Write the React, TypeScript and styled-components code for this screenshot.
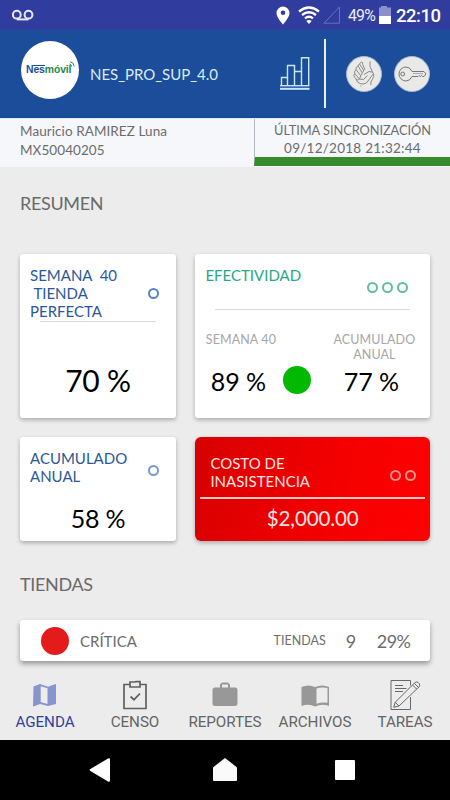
import React from "react";
import styled, { createGlobalStyle } from "styled-components";

const GlobalStyle = createGlobalStyle`
  * { box-sizing: border-box; }
  body { margin: 0; background: #ececec; font-family: Lato, sans-serif; }
`;

const Screen = styled.div`
  width: 450px;
  height: 800px;
  display: flex;
  flex-direction: column;
  overflow: hidden;
  background: #ececec;
`;

const StatusBar = styled.div`
  height: 30px;
  flex: none;
  display: flex;
  align-items: center;
  padding: 0 10px 0 12px;
  background: #303d9f;
  color: #fff;
  font-family: Roboto, sans-serif;
  svg { flex: none; display: block; }
`;

const StatusCluster = styled.div`
  flex: 1;
  display: flex;
  align-items: center;
  svg:nth-of-type(3) { margin-left: 8px; }
  svg:nth-of-type(4) { margin-left: 3px; }
`;

const Spacer = styled.div`
  flex: 1;
`;

const Battery = styled.span`
  font-size: 15.8px;
  width: 27px;
  margin-left: 7px;
  padding-top: 1px;
  letter-spacing: -0.8px;
  color: #eceefa;
  white-space: nowrap;
`;

const Clock = styled.span`
  font-size: 18.5px;
  font-weight: 500;
  width: 44px;
  margin-left: 4px;
  padding-top: 1px;
  letter-spacing: -0.5px;
  white-space: nowrap;
`;

const Header = styled.header`
  height: 88px;
  flex: none;
  display: flex;
  align-items: center;
  padding: 0 20.5px 0 21px;
  background: #1b4d9b;
  border-bottom: 1px solid #104a95;
`;

const Logo = styled.div`
  width: 58px;
  height: 58px;
  margin: -7px 11px 0 0;
  flex: none;
  display: flex;
  align-items: center;
  padding-left: 5px;
  border-radius: 50%;
  background: #fff;
  font: 700 10.4px/14px "Liberation Sans", sans-serif;
  svg { display: block; flex: none; margin: -13px 0 0 -2px; }
`;

const BrandPart = styled.span<{ $color: string; $bar?: boolean }>`
  display: block;
  color: ${(p) => p.$color};
  letter-spacing: -0.1px;
  background: ${(p) => (p.$bar ? "linear-gradient(#19509b, #19509b) 7px 2px / 12px 1px no-repeat" : "none")};
`;

const AppName = styled.div`
  flex: 1;
  font-size: 15px;
  line-height: 18px;
  letter-spacing: -0.03px;
  color: #dbeafa;
  white-space: nowrap;
`;

const Divider = styled.div`
  width: 1.5px;
  height: 69px;
  margin: 0 20.5px 0 14px;
  background: #e9f2fb;
`;

const RoundButton = styled.div`
  width: 36px;
  height: 36px;
  margin-left: 11.5px;
  border-radius: 50%;
  background: #e9e9e8;
  border: 1px solid #a9bbd3;
  display: flex;
  align-items: center;
  justify-content: center;
  &:first-of-type { margin-left: 0; }
`;

const Buttons = styled.div`
  display: flex;
`;

const InfoBar = styled.section`
  height: 49px;
  flex: none;
  display: flex;
  background: #f5f7fb;
  border-top: 1px solid #e4ebf5;
  color: #6c6c6c;
`;

const User = styled.div`
  width: 254px;
  padding: 3px 0 0 20px;
  font-size: 13.5px;
  line-height: 18.5px;
  letter-spacing: 0.07px;
`;

const Sync = styled.div`
  flex: 1;
  height: 47px;
  padding-top: 2px;
  border-left: 1px solid #b4b9c2;
  border-bottom: 9px solid #388b2c;
  text-align: center;
  font-size: 13.5px;
  line-height: 18px;
  white-space: nowrap;
`;

const SyncTitle = styled.div`
  font-size: 12.8px;
  letter-spacing: -0.05px;
`;

const SyncDate = styled.div`
  letter-spacing: 0.25px;
`;

const Content = styled.main`
  flex: 1;
  padding: 0 20px;
`;

const SectionTitle = styled.h2<{ $top: number; $bottom: number }>`
  margin: 0;
  padding: ${(p) => p.$top}px 0 ${(p) => p.$bottom}px;
  font-size: 18px;
  font-weight: 400;
  line-height: 22px;
  letter-spacing: -0.35px;
  color: #6a6a6a;
`;

const Grid = styled.div`
  display: grid;
  grid-template-columns: 156px 234.6px;
  grid-template-rows: 164px 104px;
  column-gap: 19.4px;
  row-gap: 19px;
`;

const Card = styled.div<{ $danger?: boolean }>`
  display: flex;
  flex-direction: column;
  border-radius: ${(p) => (p.$danger ? 6 : 3)}px;
  background: ${(p) => (p.$danger ? "linear-gradient(100deg, #d80000, #f60000 65%, #ff0000)" : "#fff")};
  box-shadow: 0 2px 4px rgba(0, 0, 0, 0.28);
  color: ${(p) => (p.$danger ? "#ffe3e0" : "#000")};
`;

const CardHead = styled.div<{ $height: number; $color: string; $padding: string }>`
  height: ${(p) => p.$height}px;
  flex: none;
  display: flex;
  justify-content: space-between;
  padding: ${(p) => p.$padding};
  font-size: 15px;
  line-height: 18.1px;
  color: ${(p) => p.$color};
  white-space: pre;
`;

const Rings = styled.div<{ $top: number }>`
  display: flex;
  gap: 4px;
  height: 11px;
  margin-top: ${(p) => p.$top}px;
`;

const Ring = styled.i<{ $color: string }>`
  width: 11px;
  height: 11px;
  border-radius: 50%;
  border: 2px solid ${(p) => p.$color};
`;

const Rule = styled.div<{ $margin: string; $color?: string; $size?: number }>`
  height: ${(p) => p.$size ?? 1}px;
  flex: none;
  margin: ${(p) => p.$margin};
  background: ${(p) => p.$color ?? "#dadada"};
`;

const Value = styled.div<{ $size: number; $top?: number; $spacing?: number }>`
  margin-top: ${(p) => p.$top ?? 0}px;
  font-size: ${(p) => p.$size}px;
  line-height: 36px;
  letter-spacing: ${(p) => p.$spacing ?? 0}px;
  text-align: center;
  white-space: nowrap;
`;

const Stats = styled.div`
  display: grid;
  grid-template-columns: 86px 31.5px 117px;
  margin-top: 23px;
`;

const StatLabel = styled.div<{ $inset?: number }>`
  height: 30px;
  padding-left: ${(p) => p.$inset ?? 0}px;
  font-size: 12.5px;
  line-height: 14.7px;
  letter-spacing: 0.1px;
  text-align: center;
  color: #a6a6a6;
  white-space: pre-line;
`;

const Dot = styled.i<{ $color: string; $margin?: string }>`
  width: 28px;
  height: 28px;
  margin: ${(p) => p.$margin ?? "0"};
  border-radius: 50%;
  background: ${(p) => p.$color};
`;

const StoreRow = styled.div`
  height: 41px;
  display: flex;
  align-items: center;
  padding: 0 19.5px 0 21px;
  border-radius: 3px;
  background: #fff;
  box-shadow: 0 3px 5px rgba(0, 0, 0, 0.36);
  color: #6c6c6c;
`;

const StoreName = styled.div`
  flex: 1;
  margin-left: 11px;
  font-size: 15px;
`;

const StoreUnit = styled.div`
  font-size: 12.5px;
`;

const StoreNumber = styled.div<{ $gap: number }>`
  margin-left: ${(p) => p.$gap}px;
  font-size: 18px;
  letter-spacing: -0.5px;
`;

const TabBar = styled.nav`
  height: 70px;
  flex: none;
  display: grid;
  grid-template-columns: repeat(5, 90px);
  background: #ececec;
`;

const Tab = styled.div<{ $active?: boolean }>`
  display: flex;
  flex-direction: column;
  align-items: center;
  font-family: Roboto, sans-serif;
  font-size: 15.2px;
  line-height: 18px;
  letter-spacing: -0.05px;
  color: ${(p) => (p.$active ? "#30409c" : "#646464")};
  svg { display: block; height: 43px; flex: none; }
`;

const SystemNav = styled.div`
  height: 60px;
  flex: none;
  background: #000;
  display: grid;
  grid-template-columns: 40px 120px 130px 110px 50px;
  align-items: center;
  justify-items: center;
  svg { display: block; }
`;

const tabs = [
  {
    label: "AGENDA",
    active: true,
    icon: (
      <svg width="40" height="43" viewBox="0 0 40 43">
        <path fill="#8994cf" fillRule="evenodd" d="M8.500 16.500 15 14l8 2.700 7.500-2.700q.5 0 .5.500v19.500l-8 2-8-2-6.500 2.500-.5-.5zM15.700 16.200v15.800l6.800 2V18.300z" />
      </svg>
    ),
  },
  {
    label: "CENSO",
    icon: (
      <svg width="40" height="43" viewBox="0 0 40 43" fill="none" stroke="#606060" strokeWidth="1.700">
        <path d="M15 14.500H9v24h22v-24h-6M15 12h5l1-.3h4V17H15zM15.500 26.500l3.500 3.200 6-6.200" />
      </svg>
    ),
  },
  {
    label: "REPORTES",
    icon: (
      <svg width="40" height="43" viewBox="0 0 40 43">
        <path fill="#989898" fillRule="evenodd" d="M10 18h5v-3l2-2h6l2 2v3h5q2.500 0 2.500 2.500v14q0 2-2.500 2H10q-2.500 0-2.500-2v-14Q7.500 18 10 18m7 0h6v-3h-6z" transform="translate(0 -.5)" />
      </svg>
    ),
  },
  {
    label: "ARCHIVOS",
    icon: (
      <svg width="40" height="43" viewBox="0 0 40 43">
        <path fill="#989898" fillRule="evenodd" d="M6.500 17q7-3 13.500 0 7-3 14 0v19q-7-2.700-14 .5-6.500-3-13.500-.5zM21.500 18.500v15.300q5.500-2.200 11-1V18q-5.500-1.400-11 .5" />
      </svg>
    ),
  },
  {
    label: "TAREAS",
    icon: (
      <svg width="40" height="43" viewBox="0 0 40 43" fill="none" stroke="#686868" strokeWidth="1">
        <path d="M25.500 15.500v-5H6v29h19.500V27M10 15.500h8M10 18.500h11.500M10 21.500h8" />
        <path d="M8.700 37.300l1.500-5L29.800 12.700q1.600-1.500 3.300-.2l1 1q1.400 1.700 0 3.300L14 36zM10.200 32.300 14 36M27.500 15l4 4M29.300 13.300l4 4" />
      </svg>
    ),
  },
];

function StatusIcons() {
  return (
    <>
      <svg width="22" height="14" viewBox="0 0 22 14" fill="none" stroke="#e6e8f6" strokeWidth="2">
        <circle cx="4.800" cy="6.700" r="3.900" />
        <circle cx="16.500" cy="6.700" r="3.900" />
        <path d="M4.800 11.400h11.700" />
      </svg>
      <Spacer />
      <svg width="14" height="20" viewBox="0 0 14 20">
        <path fill="#fff" fillRule="evenodd" d="M7 1.500A6.500 6.500 0 0 0 .5 8C.5 12.500 7 19.500 7 19.500s6.500-7 6.500-11.500A6.500 6.500 0 0 0 7 1.500m0 4a2.300 2.300 0 1 1 0 4.600 2.300 2.300 0 0 1 0-4.600" />
      </svg>
      <svg width="22" height="18" viewBox="0 0 22 18" fill="none" stroke="#fff" strokeWidth="2.300">
        <path d="M1 5.500q10-8 20 0M4 9q7-5.500 14 0M7 12.300q4-3 8 0" />
        <path d="M8.300 15q2.700-1.800 5.400 0L11 18z" fill="#fff" stroke="none" />
      </svg>
      <svg width="18" height="18" viewBox="0 0 18 18" fill="none" stroke="#6871bd">
        <path d="M1 17.200h15.500V1z" />
      </svg>
    </>
  );
}

export default function App() {
  return (
    <>
      <GlobalStyle />
      <Screen>
        <StatusBar>
          <StatusCluster>
            <StatusIcons />
          </StatusCluster>
          <Battery>49%</Battery>
          <svg width="17" height="20" viewBox="0 0 17 20">
            <path d="M5 2.500h1V1h6v1.500h4V11H4V2.500z" fill="#8b8fcc" />
            <path d="M4 11h12v8H4z" fill="#fff" />
          </svg>
          <Clock>22:10</Clock>
        </StatusBar>

        <Header>
          <Logo>
            <BrandPart $color="#19509b" $bar>Nes</BrandPart>
            <BrandPart $color="#218a4c">móvil</BrandPart>
            <svg width="6" height="6" viewBox="0 0 6 6" fill="none" stroke="#2f9550">
              <path d="M.5 3q2 .2 2 2.500M1 .8q4 .4 4.200 4.700" />
            </svg>
          </Logo>
          <AppName>NES_PRO_SUP_4.0</AppName>
          <svg width="30" height="34" viewBox="0 0 30 34" fill="none" stroke="#c9e8fb" strokeWidth="1.400">
            <path d="M1.500 28v-7.500h6V28M7.500 28V8.500h7V28M14.500 28V14.500h7V28M21.500 28V.8h7.200V28" />
            <path d="M0 28.700h29.500" />
            <path d="M0 31.800h29.500" strokeWidth="2" />
          </svg>
          <Divider />
          <Buttons>
            <RoundButton>
              <svg width="34" height="34" viewBox="0 0 34 34" fill="none" stroke="#8a8a8a" strokeWidth="1">
                <path d="M14.500 5q-2.500 1.500-3.500 4l4 6.500q2-.5 1.500-2.500l-4-6M11 9q-2.500 1-2 3.500l4.500 6q2-.5 1.500-3M9 12.500q-2 1.500-1.300 4l4.300 5q2-.5 1.500-3M7.700 16.500Q6 18 7.500 20.500l3 2.500q1.500 0 1.500-1.500M14.500 5q1.500 0 1.200 2.500L18 13" />
                <path d="M23 4.500v5l3 6.500M17 17.500l5-3q3.500 0 4.500 2L21 24q-1.500 3-5 3-3 0-5.500-2l-1.500-3M12 22l4.500.5 4-4M26.500 16.500q1 3-1 5.500-2.500 3-1.500 6M13.500 29h.8" />
              </svg>
            </RoundButton>
            <RoundButton>
              <svg width="34" height="26" viewBox="0 0 34 26" fill="none" stroke="#777" strokeWidth="1">
                <path d="M17 10.500Q15 6 11 6a7 7 0 1 0 0 14q4 0 6-4.500h6l1-1 1.300 1 1.200-1 1.300 1h1.200l2-2.500-2-2.500z" />
                <circle cx="7.700" cy="13" r="1.900" />
                <path d="M18 12.500h10" stroke="#aaa" />
              </svg>
            </RoundButton>
          </Buttons>
        </Header>

        <InfoBar>
          <User>
            <div>Mauricio RAMIREZ Luna</div>
            <div>MX50040205</div>
          </User>
          <Sync>
            <SyncTitle>ÚLTIMA SINCRONIZACIÓN</SyncTitle>
            <SyncDate>09/12/2018 21:32:44</SyncDate>
          </Sync>
        </InfoBar>

        <Content>
          <SectionTitle $top={25} $bottom={40}>RESUMEN</SectionTitle>
          <Grid>
            <Card>
              <CardHead $height={67} $color="#2a5899" $padding="12px 17px 0 10px">
                <span>{"SEMANA  40\n TIENDA\nPERFECTA"}</span>
                <Rings $top={22}>
                  <Ring $color="#5585c5" />
                </Rings>
              </CardHead>
              <Rule $margin="0 20px" />
              <Value $size={30} $top={40} $spacing={-0.2}>70 %</Value>
            </Card>
            <Card>
              <CardHead $height={55} $color="#2aa783" $padding="12px 22px 0 10px">
                <span>EFECTIVIDAD</span>
                <Rings $top={16}>
                  <Ring $color="#5fbf9f" />
                  <Ring $color="#5fbf9f" />
                  <Ring $color="#5fbf9f" />
                </Rings>
              </CardHead>
              <Rule $margin="0 20px" />
              <Stats>
                <StatLabel $inset={5}>SEMANA 40</StatLabel>
                <span />
                <StatLabel $inset={6}>{"ACUMULADO\nANUAL"}</StatLabel>
                <Value $size={25}>89 %</Value>
                <Dot $color="#00b900" $margin="3px 0 0 2px" />
                <Value $size={25}>77 %</Value>
              </Stats>
            </Card>
            <Card>
              <CardHead $height={50} $color="#2a5899" $padding="12px 17px 0 10px">
                <span>{"ACUMULADO\nANUAL"}</span>
                <Rings $top={16}>
                  <Ring $color="#7799d0" />
                </Rings>
              </CardHead>
              <Value $size={25} $top={13} $spacing={-0.2}>58 %</Value>
            </Card>
            <Card $danger>
              <CardHead $height={60} $color="#ffe3e0" $padding="17px 14px 0 15px">
                <span>{"COSTO DE\nINASISTENCIA"}</span>
                <Rings $top={16}>
                  <Ring $color="#ff8f8f" />
                  <Ring $color="#ff8f8f" />
                </Rings>
              </CardHead>
              <Rule $margin="0 5px" $color="#ffc6c2" $size={1.5} />
              <Value $size={20.5} $top={1.5} $spacing={-0.1}>$2,000.00</Value>
            </Card>
          </Grid>
          <SectionTitle $top={32} $bottom={25}>TIENDAS</SectionTitle>
          <StoreRow>
            <Dot $color="#e31b1b" />
            <StoreName>CRÍTICA</StoreName>
            <StoreUnit>TIENDAS</StoreUnit>
            <StoreNumber $gap={20}>9</StoreNumber>
            <StoreNumber $gap={21}>29%</StoreNumber>
          </StoreRow>
        </Content>

        <TabBar>
          {tabs.map((t) => (
            <Tab key={t.label} $active={t.active}>
              {t.icon}
              {t.label}
            </Tab>
          ))}
        </TabBar>

        <SystemNav>
          <span />
          <svg width="22" height="26" viewBox="0 0 22 26">
            <path d="M1 12.300q-.8.700 0 1.400L19 24.500q2 1 2-1v-21q0-2-2-1z" fill="#fff" />
          </svg>
          <svg width="26" height="26" viewBox="0 0 26 26">
            <path d="M13 1 1.500 10q-.5.400-.5 1v12q0 1 1 1h22q1 0 1-1V11q0-.6-.5-1z" fill="#fafafa" />
          </svg>
          <svg width="20" height="20" viewBox="0 0 20 20">
            <rect width="20" height="20" rx="1" fill="#fff" />
          </svg>
        </SystemNav>
      </Screen>
    </>
  );
}
